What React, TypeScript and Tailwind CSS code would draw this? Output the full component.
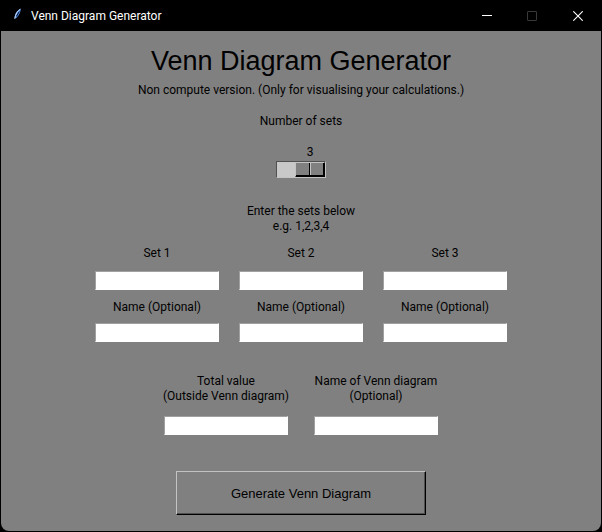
import React, { useState } from 'react';

interface EntryProps {
    id: string;
    label: React.ReactNode;
    labelClass: string;
    value: string;
    onChange: (value: string) => void;
}

function Entry({ id, label, labelClass, value, onChange }: EntryProps) {
    return (
        <div className="flex w-[124px] flex-col items-center">
            <label htmlFor={id} className={`text-center whitespace-nowrap ${labelClass}`}>
                {label}
            </label>
            <input
                id={id}
                type="text"
                autoComplete="off"
                value={value}
                onChange={(e) => onChange(e.target.value)}
                className="h-[19px] w-full border border-t-[#a0a0a0] border-r-white border-b-white border-l-[#a0a0a0] bg-white px-px text-black outline-none"
            />
        </div>
    );
}

function FeatherIcon() {
    return (
        <svg width="16" height="16" viewBox="0 0 16 16" aria-hidden="true">
            <path d="M11.8 0.8C9 1.8 6.4 4.6 5.8 8L5.4 11L7.8 9.4C10.2 7.2 11.6 4.4 11.8 0.8Z" fill="#4a86e0" />
            <path d="M11.4 1.2C8.4 3 6.4 6 5.8 10.6" fill="none" stroke="#cfe2fb" strokeWidth="1" />
            <path d="M10.2 3.6L7.4 8.4" fill="none" stroke="#0c1830" strokeWidth="1" />
        </svg>
    );
}

function TitleBar() {
    return (
        <header className="flex h-[31px] items-center bg-black pl-2 text-white">
            <FeatherIcon />
            <span className="ml-[6px] flex-1 pt-px">Venn Diagram Generator</span>
            <button type="button" aria-label="Minimize" className="flex h-full w-[45px] items-center justify-center">
                <svg width="10" height="10" viewBox="0 0 10 10">
                    <path d="M0 4.5H10" stroke="#fff" />
                </svg>
            </button>
            <button type="button" aria-label="Maximize" disabled className="flex h-full w-[46px] items-center justify-center">
                <svg width="10" height="10" viewBox="0 0 10 10">
                    <rect x="0.5" y="0.5" width="9" height="9" rx="0.5" fill="none" stroke="#383838" />
                </svg>
            </button>
            <button type="button" aria-label="Close" className="flex h-full w-[46px] items-center justify-center">
                <svg width="10" height="10" viewBox="0 0 10 10">
                    <path d="M0.3 0.3L9.7 9.7M9.7 0.3L0.3 9.7" stroke="#fff" strokeWidth="1.1" />
                </svg>
            </button>
        </header>
    );
}

const SLIDER =
    'block h-[17px] w-full appearance-none border border-t-[#505050] border-l-[#505050] border-r-[#c3c3c3] border-b-[#c3c3c3] bg-[#c8c8c8] outline-none';
const THUMB =
    '[&::-webkit-slider-thumb]:h-[15px] [&::-webkit-slider-thumb]:w-[30px] [&::-webkit-slider-thumb]:appearance-none [&::-webkit-slider-thumb]:border [&::-webkit-slider-thumb]:border-t-[#c3c3c3] [&::-webkit-slider-thumb]:border-l-[#c3c3c3] [&::-webkit-slider-thumb]:border-r-black [&::-webkit-slider-thumb]:border-b-black [&::-webkit-slider-thumb]:bg-[linear-gradient(to_right,#808080_13px,#000_13px,#000_14px,#c3c3c3_14px,#c3c3c3_15px,#808080_15px)] [&::-webkit-slider-thumb]:shadow-[inset_-1px_-1px_0_#000]';

export default function App() {
    const [count, setCount] = useState(3);
    const [values, setValues] = useState<Record<string, string>>({});

    const field = (id: string) => ({
        id,
        value: values[id] ?? '',
        onChange: (value: string) => setValues((prev) => ({ ...prev, [id]: value }))
    });

    const sets = Array.from({ length: count }, (_, i) => i + 1);

    return (
        <div className="flex min-h-screen flex-col bg-black px-px pb-px font-[Roboto,sans-serif] text-[12px] leading-[15px]">
            <TitleBar />
            <main className="flex flex-1 flex-col items-center rounded-b-lg bg-[#808080] pb-4 text-black">
                <h1 className="mt-[14px] font-['Liberation_Sans',sans-serif] text-[27px] leading-8">
                    Venn Diagram Generator
                </h1>
                <p className="mt-[6px]">Non compute version. (Only for visualising your calculations.)</p>

                <label htmlFor="count" className="mt-4">
                    Number of sets
                </label>
                <div className="mt-4 w-[50px]">
                    <output htmlFor="count" className="mb-px ml-auto block w-[32px] text-center">
                        {count}
                    </output>
                    <input
                        id="count"
                        type="range"
                        min={2}
                        max={3}
                        value={count}
                        onChange={(e) => setCount(Number(e.target.value))}
                        className={`${SLIDER} ${THUMB}`}
                    />
                </div>

                <p className="mt-[26px] text-center">
                    Enter the sets below
                    <br />
                    e.g. 1,2,3,4
                </p>
                <div className="mt-3 flex gap-5">
                    {sets.map((n) => (
                        <div key={n} className="flex flex-col gap-[10px]">
                            <Entry {...field(`set-${n}`)} label={`Set ${n}`} labelClass="mb-[10px]" />
                            <Entry {...field(`name-${n}`)} label="Name (Optional)" labelClass="mb-2" />
                        </div>
                    ))}
                </div>

                <div className="mt-8 flex gap-[26px]">
                    <Entry
                        {...field('total')}
                        label={
                            <>
                                Total value
                                <br />
                                (Outside Venn diagram)
                            </>
                        }
                        labelClass="mb-3"
                    />
                    <Entry
                        {...field('title')}
                        label={
                            <>
                                Name of Venn diagram
                                <br />
                                (Optional)
                            </>
                        }
                        labelClass="mb-3"
                    />
                </div>

                <button
                    type="button"
                    className="mt-9 h-11 w-[250px] border border-t-[#c3c3c3] border-r-black border-b-black border-l-[#c3c3c3] bg-[#808080] font-['Liberation_Sans',sans-serif] text-[13px] shadow-[inset_-1px_-1px_0_#505050]"
                >
                    Generate Venn Diagram
                </button>
            </main>
        </div>
    );
}
